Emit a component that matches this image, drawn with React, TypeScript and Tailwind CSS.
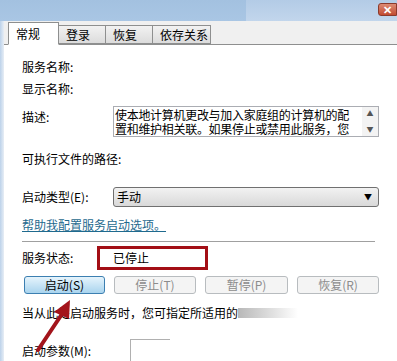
import React from 'react';

const Row: React.FC<{ className?: string; children?: React.ReactNode }> = ({ className = '', children }) => (
  <div className={`flex items-center ${className}`}>{children}</div>
);

const ActionButton: React.FC<{ label: string; active?: boolean; className?: string }> = ({ label, active, className = '' }) => (
  <div
    className={`h-[18px] flex items-center justify-center rounded-[3px] border text-[12px] ${
      active
        ? 'border-[#3c7fb1] bg-gradient-to-b from-[#e6f4fc] to-[#a9d4ee] text-black'
        : 'border-[#b8bcbf] bg-[#f4f4f4] text-[#8c8c8c]'
    } ${className}`}
  >
    {label}
  </div>
);

const Tab: React.FC<{ label: string; selected?: boolean; width: string }> = ({ label, selected, width }) => (
  <div
    className={`${width} flex items-center pl-[7px] border border-[#8e8f8f] text-[12px] ${
      selected
        ? 'h-[23px] bg-white border-b-white relative z-10 -mb-px'
        : 'h-[19px] bg-gradient-to-b from-[#f2f2f2] to-[#dcdcdc] -ml-px'
    }`}
  >
    {label}
  </div>
);

export default function App() {
  return (
    <div
      className="relative w-[397px] h-[361px] overflow-hidden bg-[#f0f0f0] text-black"
      style={{ fontFamily: '"Noto Sans CJK SC", "Liberation Sans", sans-serif' }}
    >
      {/* title bar */}
      <div className="flex h-[21px]">
        <div className="w-[246px] bg-gradient-to-b from-[#a3c1e0] to-[#a9c6e4]" />
        <div className="flex-1 flex justify-end items-start pt-[3px] bg-gradient-to-b from-[#b3cbe6] to-[#c2d6ec]">
          <div className="w-[19px] h-[13px] rounded-l-[3px] border border-[#8b3a2c] bg-gradient-to-b from-[#dc8a74] to-[#c24a30] flex items-center justify-center text-white text-[11px] font-bold leading-none">
            ✕
          </div>
        </div>
      </div>

      <div className="flex h-[340px]">
        <div className="w-[4px] bg-gradient-to-r from-[#bcd2ea] to-[#e8eef5]" />
        <div className="flex-1 flex flex-col">
          {/* tabs */}
          <div className="flex items-end h-[25px] pl-[4px] border-b border-[#8e8f8f]">
            <Tab label="常规" selected width="w-[51px]" />
            <Tab label="登录" width="w-[48px]" />
            <Tab label="恢复" width="w-[48px]" />
            <Tab label="依存关系" width="w-[59px]" />
          </div>

          {/* panel */}
          <div className="flex-1 bg-white pl-[18px] pt-[11px] text-[12px] leading-[16px]">
            <Row className="h-[22px]">服务名称:</Row>
            <Row className="h-[22px]">显示名称:</Row>

            <div className="flex mt-[6px] h-[31px]">
              <div className="w-[91px] pt-[3px]">描述:</div>
              <div className="w-[266px] flex border border-[#abadb3] bg-white overflow-hidden">
                <div className="flex-1 pl-[1px] text-[12px] tracking-[-0.3px]">
                  <div className="leading-[15px] whitespace-nowrap">使本地计算机更改与加入家庭组的计算机的配</div>
                  <div className="leading-[14px] whitespace-nowrap">置和维护相关联。如果停止或禁用此服务，您</div>
                </div>
                <div className="w-[16px] flex flex-col items-center justify-between py-[3px] bg-[#f3f3f3] text-[7px] text-[#555] leading-none">
                  <span>▲</span>
                  <span>▼</span>
                </div>
              </div>
            </div>

            <Row className="h-[22px] mt-[11px]">可执行文件的路径:</Row>

            <div className="flex items-center mt-[17px] h-[20px]">
              <div className="w-[91px]">启动类型(E):</div>
              <div className="w-[266px] h-[20px] flex items-center justify-between rounded-[3px] border border-[#707070] bg-gradient-to-b from-[#f2f2f2] to-[#d9d9d9] pl-[3px] pr-[6px]">
                <span>手动</span>
                <span className="text-[8px] leading-none">▼</span>
              </div>
            </div>

            <Row className="h-[22px] mt-[7px]">
              <span className="text-[#1f6a8e] underline">帮助我配置服务启动选项。</span>
            </Row>

            <div className="h-px w-[353px] bg-[#a0a0a0] mt-[5px]" />

            <div className="flex items-center mt-[4px] h-[24px]">
              <div className="w-[75px]">服务状态:</div>
              <div className="w-[111px] h-[24px] border-[3px] border-[#a30f16] flex items-center pl-[13px]">已停止</div>
            </div>

            <div className="flex mt-[6px] gap-[9px] pl-[2px]">
              <ActionButton label="启动(S)" active className="w-[81px]" />
              <ActionButton label="停止(T)" className="w-[82px]" />
              <ActionButton label="暂停(P)" className="w-[83px]" />
              <ActionButton label="恢复(R)" className="w-[82px]" />
            </div>

            <div className="flex items-center mt-[9px] h-[20px]">
              <span>当从此处启动服务时，您可指定所适用的</span>
              <div className="w-[60px] h-[10px] bg-gradient-to-r from-[#b8b8b8] to-white" />
            </div>

            <div className="flex items-end mt-[16px] h-[22px]">
              <div className="w-[108px] pb-[2px]">启动参数(M):</div>
              <div className="w-[40px] h-[22px] border-t border-l border-[#b0b0b0]" />
            </div>
          </div>
        </div>
      </div>

      {/* annotation arrow */}
      <svg className="absolute left-0 top-0 pointer-events-none" width="397" height="361">
        <line x1="38" y1="350" x2="64" y2="311" stroke="#a3141b" strokeWidth="4" strokeLinecap="round" />
        <polygon points="70,300 54,312 69,319" fill="#a3141b" />
      </svg>
    </div>
  );
}
